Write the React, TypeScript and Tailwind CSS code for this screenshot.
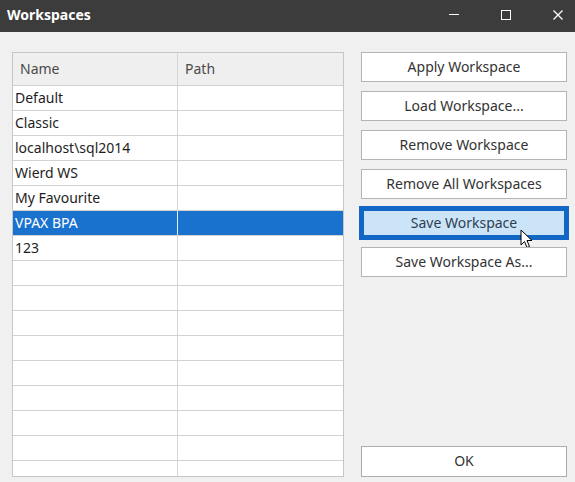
import { useState } from "react"

const workspaces = ["Default", "Classic", "localhost\\sql2014", "Wierd WS", "My Favourite", "VPAX BPA", "123"]

const buttons = [
  "Apply Workspace",
  "Load Workspace...",
  "Remove Workspace",
  "Remove All Workspaces",
  "Save Workspace",
  "Save Workspace As...",
]

const Cursor = () => (
  <svg width="14" height="20" viewBox="0 0 14 20" className="absolute left-[159px] top-[21px]">
    <path d="M1 1 L1 16 L4.5 12.5 L7 18.5 L9.5 17.5 L7 11.5 L12 11.5 Z" fill="white" stroke="black" strokeWidth="1" strokeLinejoin="round" />
  </svg>
)

export default function App() {
  const [selected, setSelected] = useState(5)
  const rows = Array.from({ length: 16 }, (_, i) => workspaces[i] ?? "")

  return (
    <div className="w-[575px] h-[482px] bg-[#f0f0f0] flex flex-col overflow-hidden font-['Noto_Sans',sans-serif] text-[#1e1e1e]">
      {/* title bar */}
      <div className="h-[32px] bg-[#3c3c3c] flex items-center text-white shrink-0">
        <div className="pl-[7px] pb-[3px] font-bold text-[14px] flex-1">Workspaces</div>
        <div className="flex items-center gap-[42px] pr-[12px] pb-[3px]">
          <div className="w-[10px] h-px bg-white" />
          <div className="w-[10px] h-[10px] border border-white" />
          <svg width="10" height="10" viewBox="0 0 10 10">
            <path d="M0.5 0.5 L9.5 9.5 M9.5 0.5 L0.5 9.5" stroke="white" strokeWidth="1.3" />
          </svg>
        </div>
      </div>

      <div className="flex flex-1 pt-[20px] pl-[12px] pr-[8px] pb-[5px] gap-[17px] min-h-0">
        {/* grid */}
        <div className="w-[332px] border border-[#c6c6c6] bg-white overflow-hidden flex flex-col">
          <div className="flex h-[33px] bg-[#efefef] border-b border-[#d0d0d0] text-[14px] text-[#4a4a4a] shrink-0">
            <div className="w-[165px] border-r border-[#d6d6d6] flex items-center pl-[7px] pb-[2px]">Name</div>
            <div className="flex-1 flex items-center pl-[7px] pb-[2px]">Path</div>
          </div>
          {rows.map((name, i) => {
            const isSel = i === selected
            return (
              <div
                key={i}
                onClick={() => name && setSelected(i)}
                className={`flex h-[25px] shrink-0 border-b border-[#d2d2d2] text-[14px] ${
                  isSel ? "bg-[#1a72cf] text-white" : "bg-white"
                }`}
              >
                <div
                  className={`w-[165px] border-r flex items-center pl-[2px] leading-none ${
                    isSel ? "border-[#e6eef8]" : "border-[#d6d6d6]"
                  }`}
                >
                  {name}
                </div>
                <div className="flex-1" />
              </div>
            )
          })}
        </div>

        {/* buttons */}
        <div className="w-[206px] flex flex-col justify-between">
          <div className="flex flex-col gap-[9px]">
            {buttons.map((b) => {
              const active = b === "Save Workspace"
              return (
                <div key={b} className="relative">
                  <button
                    className={`w-full h-[30px] flex items-center justify-center pb-[2px] text-[14px] ${
                      active
                        ? "bg-[#cce4f7] border-[3px] border-[#1267c4] outline-2 outline-solid outline-[#1267c4] text-[#2d3e52]"
                        : "bg-white border border-[#b4b4b4] text-[#333]"
                    }`}
                  >
                    {b}
                  </button>
                  {active && <Cursor />}
                </div>
              )
            })}
          </div>
          <button className="w-full h-[31px] bg-white border border-[#adadad] text-[14px] text-[#333] flex items-center justify-center pb-[2px]">
            OK
          </button>
        </div>
      </div>
    </div>
  )
}
